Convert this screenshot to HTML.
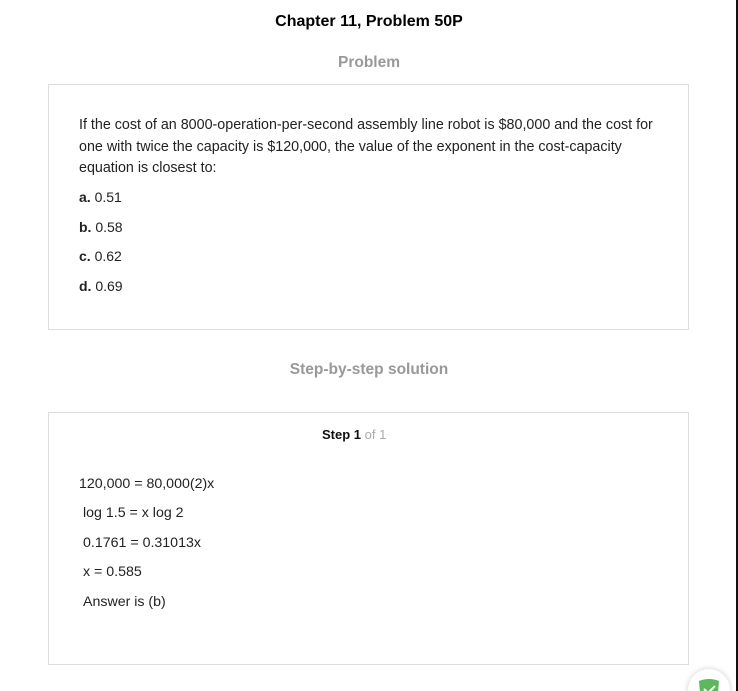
<!DOCTYPE html>
<html><head><meta charset="utf-8"><style>
html,body{margin:0;padding:0;background:#fff;width:738px;height:691px;overflow:hidden;position:relative;font-family:"Liberation Sans",Arial,sans-serif;color:#222}
.edge{position:absolute;left:736px;top:0;width:2px;height:691px;background:#111}
h1{position:absolute;top:13px;left:0;width:738px;text-align:center;font-size:16px;font-weight:bold;margin:0;color:#000}
.sec{position:absolute;left:0;width:738px;text-align:center;font-size:15.5px;font-weight:bold;color:#999;margin:0}
.box{position:absolute;left:48px;width:639px;border:1px solid #ddd;background:#fff}
.t{position:absolute;font-size:14px;color:#222;white-space:nowrap}
b{color:#222}
.badge{position:absolute;left:688px;top:669px;width:42px;height:42px;border-radius:50%;background:#fff;box-shadow:0 0 6px rgba(0,0,0,.2)}
</style></head><body>
<div class="edge"></div>
<h1>Chapter 11, Problem 50P</h1>
<div class="sec" style="top:54px">Problem</div>
<div class="box" style="top:84px;height:244px">
<div class="t" style="left:30px;top:30px;line-height:21.5px;font-size:14.3px">If the cost of an 8000-operation-per-second assembly line robot is $80,000 and the cost for<br>one with twice the capacity is $120,000, the value of the exponent in the cost-capacity<br>equation is closest to:</div>
<div class="t" style="left:30px;top:104px"><b>a.</b> 0.51</div>
<div class="t" style="left:30px;top:134px"><b>b.</b> 0.58</div>
<div class="t" style="left:30px;top:163px"><b>c.</b> 0.62</div>
<div class="t" style="left:30px;top:193px"><b>d.</b> 0.69</div>
</div>
<div class="sec" style="top:361px">Step-by-step solution</div>
<div class="box" style="top:412px;height:251px">
<div class="t" style="left:273px;top:14px;font-size:13px"><b style="color:#111">Step 1</b> <span style="color:#aaa">of 1</span></div>
<div class="t" style="left:30px;top:63px;font-size:14.2px">120,000 = 80,000(2)x</div>
<div class="t" style="left:34px;top:92px;font-size:14.2px">log 1.5 = x log 2</div>
<div class="t" style="left:34px;top:122px;font-size:14.2px">0.1761 = 0.31013x</div>
<div class="t" style="left:34px;top:151px;font-size:14.2px">x = 0.585</div>
<div class="t" style="left:34px;top:181px;font-size:14.2px">Answer is (b)</div>
</div>
<div class="badge"><svg width="42" height="42" viewBox="0 0 42 42" style="position:absolute;left:0;top:0"><path d="M11 12 Q21 8 31 12 L30 24 Q27 32 21 34 Q15 32 12 24 Z" fill="#5cb85c"/><path d="M16 20 l4 4 l7 -7" stroke="#fff" stroke-width="2" fill="none"/></svg></div>
</body></html>
